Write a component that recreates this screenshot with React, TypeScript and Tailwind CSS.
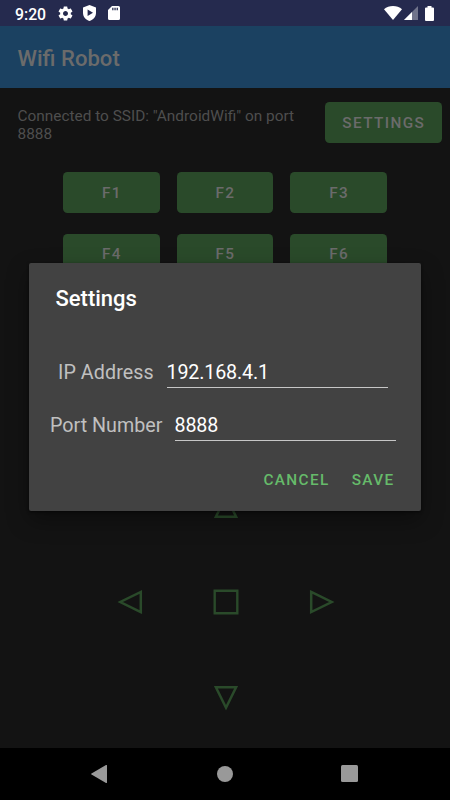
import React from 'react';

const buttonText = 'text-[15.33px] font-medium leading-[18px] tracking-[1.37px]';

function StatusBar() {
  return (
    <header className="flex h-[26px] items-center bg-[#252a4e] pl-[15px] pr-[16px] text-white">
      <span className="w-[43px] text-[15.8px] font-medium leading-[26px] pt-[3px]">9:20</span>
      <svg className="-ml-px h-[17px] w-[17px]" viewBox="0 0 24 24" fill="currentColor">
        <path d="M19.43 12.98c.04-.32.07-.64.07-.98s-.03-.66-.07-.98l2.11-1.65c.19-.15.24-.42.12-.64l-2-3.46c-.12-.22-.39-.3-.61-.22l-2.49 1c-.52-.4-1.08-.73-1.69-.98l-.38-2.65C14.46 2.18 14.25 2 14 2h-4c-.25 0-.46.18-.49.42l-.38 2.65c-.61.25-1.17.59-1.69.98l-2.49-1c-.23-.09-.49 0-.61.22l-2 3.46c-.13.22-.07.49.12.64l2.11 1.65c-.04.32-.07.65-.07.98s.03.66.07.98l-2.11 1.65c-.19.15-.24.42-.12.64l2 3.46c.12.22.39.3.61.22l2.49-1c.52.4 1.08.73 1.69.98l.38 2.65c.03.24.24.42.49.42h4c.25 0 .46-.18.49-.42l.38-2.65c.61-.25 1.17-.59 1.69-.98l2.49 1c.23.09.49 0 .61-.22l2-3.46c.12-.22.07-.49-.12-.64l-2.11-1.65zM12 15.5c-1.93 0-3.5-1.57-3.5-3.5s1.57-3.5 3.5-3.5 3.5 1.57 3.5 3.5-1.57 3.5-3.5 3.5z" />
      </svg>
      <svg className="ml-[9px] h-[16px] w-[13px]" viewBox="0 0 13 16" fill="currentColor">
        <path fillRule="evenodd" d="M6.5 0 13 2.4V8c0 3.7-2.8 7-6.5 8C2.8 15 0 11.7 0 8V2.4ZM4.6 4.5v6.6L10 7.8Z" />
      </svg>
      <svg className="ml-[12px] h-[14px] w-[12px]" viewBox="0 0 12 14" fill="currentColor">
        <path fillRule="evenodd" d="M4 0h6.5A1.5 1.5 0 0 1 12 1.5v11a1.5 1.5 0 0 1-1.5 1.5h-9A1.5 1.5 0 0 1 0 12.5V4ZM4.2 1.8v2.4h1.3V1.8ZM6.4 1.8v2.4h1.3V1.8ZM8.6 1.8v2.4h1.3V1.8Z" />
      </svg>
      <svg className="ml-auto h-[14px] w-[18px]" viewBox="0 0 18 14" fill="currentColor">
        <path d="M9 14 0 3.2C2.5 1.1 5.6 0 9 0s6.5 1.1 9 3.2Z" />
      </svg>
      <svg className="ml-[2px] h-[14px] w-[14px]" viewBox="0 0 14 14" fill="currentColor">
        <path d="M14 0v14H0Z" opacity=".35" />
        <path d="M8 6v8H0Z" />
      </svg>
      <svg className="ml-[7px] h-[15px] w-[9px]" viewBox="0 0 9 15" fill="currentColor">
        <path d="M2.5 0h4v1.5H8a1 1 0 0 1 1 1V14a1 1 0 0 1-1 1H1a1 1 0 0 1-1-1V2.5a1 1 0 0 1 1-1h1.5Z" />
      </svg>
    </header>
  );
}

function FunctionButton({ label }: { label: string }) {
  return (
    <button className={`h-[40.5px] rounded-[4.5px] bg-[#2a4a2a] pt-px pl-px text-[#6b6b6b] ${buttonText}`}>
      {label}
    </button>
  );
}

function Arrow({ turn = '' }: { turn?: string }) {
  return (
    <svg className={`h-[26px] w-[26px] ${turn}`} viewBox="0 0 26 26" fill="none" stroke="#2a4a2a" strokeWidth="2.5">
      <path d="M2.9 23.8 13 3.3 23.1 23.8Z" />
    </svg>
  );
}

function Field({ label, value, shift }: { label: string; value: string; shift: string }) {
  return (
    <label className={`flex h-[52.5px] items-start ${shift}`}>
      <span className="pt-px text-[19.7px] leading-[24px] text-[#c0c0c0]">{label}</span>
      <input
        className="ml-auto h-[28px] w-[221.5px] border-b border-[#c6c6c6] bg-transparent pb-[2px] text-[19.7px] leading-[24px] tracking-[-0.15px] text-white outline-none"
        defaultValue={value}
      />
    </label>
  );
}

function SettingsDialog() {
  return (
    <section
      role="dialog"
      className="absolute left-[29px] top-[263px] flex h-[247.5px] w-[392px] flex-col rounded-[2px] bg-[#424242] shadow-[0_9px_22px_rgba(0,0,0,0.35),0_1px_3px_rgba(0,0,0,0.5)]"
    >
      <h2 className="pl-[26.5px] pt-[22px] text-[22px] font-medium leading-[28px] text-white">Settings</h2>
      <div className="mt-[47px] flex flex-col">
        <Field label="IP Address" value="192.168.4.1" shift="pl-[29px] pr-[33px] tracking-[0.07px]" />
        <Field label="Port Number" value="8888" shift="pl-[21px] pr-[25px]" />
      </div>
      <div className={`flex justify-end gap-[22px] pr-[26.5px] pt-[6px] text-[#66bb6a] ${buttonText}`}>
        <button>CANCEL</button>
        <button>SAVE</button>
      </div>
    </section>
  );
}

export default function App() {
  return (
    <div className="relative flex h-[800px] w-[450px] flex-col overflow-hidden bg-[#131313] font-['Roboto',sans-serif]">
      <StatusBar />
      <div className="flex h-[61.5px] items-center bg-[#1b4161] pl-[17.5px] pt-[3px]">
        <h1 className="text-[22.1px] font-medium text-[#6b6b6b]">Wifi Robot</h1>
      </div>
      <main className="flex flex-1 flex-col">
        <div className="flex items-start justify-between pl-[17.5px] pr-[8.5px] pt-[14.5px]">
          <p className="w-[290px] pt-[5px] text-[15.4px] leading-[18px] text-[#4e4e4e]">
            Connected to SSID: "AndroidWifi" on port 8888
          </p>
          <button className={`h-[40.5px] w-[116.5px] rounded-[4.5px] bg-[#2a4a2a] pt-px pl-px text-[#6b6b6b] ${buttonText}`}>
            SETTINGS
          </button>
        </div>
        <div className="mt-[29px] grid grid-cols-3 gap-x-[17px] gap-y-[21px] px-[63px]">
          {['F1', 'F2', 'F3', 'F4', 'F5', 'F6'].map((label) => (
            <FunctionButton key={label} label={label} />
          ))}
        </div>
        <div className="ml-[81.5px] mt-[183.5px] grid grid-cols-[96px_96px_96px] grid-rows-[96px_96px_96px] place-items-center">
          <div className="col-start-2"><Arrow /></div>
          <div className="col-start-1 row-start-2"><Arrow turn="-rotate-90" /></div>
          <svg className="col-start-2 row-start-2 h-[26px] w-[26px]" viewBox="0 0 26 26" fill="none" stroke="#2a4a2a" strokeWidth="2.4">
            <path d="M1.7 1.7H24.3V24.3H1.7Z" />
          </svg>
          <div className="col-start-3 row-start-2"><Arrow turn="rotate-90" /></div>
          <div className="col-start-2 row-start-3"><Arrow turn="rotate-180" /></div>
        </div>
      </main>
      <nav className="flex h-[52.5px] shrink-0 items-center justify-between bg-black pl-[91px] pr-[92px] text-[#999]">
        <svg className="h-[18px] w-[16px]" viewBox="0 0 16 18" fill="currentColor">
          <path d="M15 0q1-.3 1 .7v16.6q0 1-1 .7L.5 9.600q-.9-.6 0-1.200Z" />
        </svg>
        <span className="ml-px h-[16px] w-[16px] rounded-full bg-[#999]" />
        <span className="h-[17px] w-[17px] rounded-[1.5px] bg-[#999]" />
      </nav>
      <SettingsDialog />
    </div>
  );
}
